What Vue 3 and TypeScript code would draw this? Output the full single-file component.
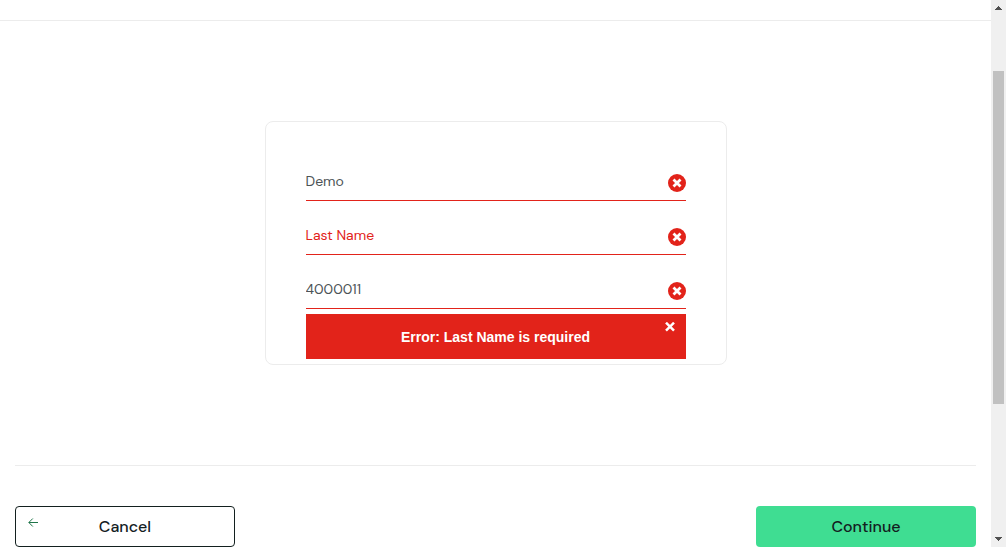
<script setup lang="ts">
import { reactive, ref } from 'vue'

interface Field {
  id: string
  label: string
  value: string
}

const fields = reactive<Field[]>([
  { id: 'first-name', label: 'First Name', value: 'Demo' },
  { id: 'last-name', label: 'Last Name', value: '' },
  { id: 'member-id', label: 'Member ID', value: '4000011' },
])
const showError = ref(true)
</script>

<template>
  <div class="shell">
    <div class="page">
      <header class="top"></header>
      <main class="content">
        <form id="details" class="card" @submit.prevent>
          <div v-for="field in fields" :key="field.id" class="field">
            <input
              :id="field.id"
              v-model="field.value"
              type="text"
              :aria-label="field.label"
              :placeholder="field.label"
              autocomplete="off"
            />
            <svg class="mark" viewBox="0 0 18 18" aria-hidden="true">
              <circle cx="9" cy="9" r="9" fill="#e2231a" />
              <path d="M5.5 5.5l7 7M12.5 5.5l-7 7" stroke="#fff" stroke-width="2.8" />
            </svg>
          </div>
          <div v-if="showError" class="alert" role="alert">
            <span>Error: Last Name is required</span>
            <button type="button" class="close" aria-label="Close" @click="showError = false">
              <svg viewBox="0 0 10 10" aria-hidden="true">
                <path d="M1 .7l8 8M9 .7l-8 8" stroke="#fff" stroke-width="2.5" />
              </svg>
            </button>
          </div>
        </form>
      </main>
      <footer class="actions">
        <button type="button" class="btn cancel">
          <svg class="arrow" viewBox="0 0 10 10" aria-hidden="true">
            <path d="M10 4.5H1M4.8 .5L.8 4.5l4 4" fill="none" stroke="#1f7549" stroke-width="1" />
          </svg>
          Cancel
        </button>
        <button type="submit" form="details" class="btn continue">Continue</button>
      </footer>
    </div>
    <div class="scrollbar" aria-hidden="true">
      <svg class="cap" viewBox="0 0 15 17">
        <path d="M7 6h1v1h1v1h1v1h1v1H4V9h1V8h1V7h1z" fill="#505050" />
      </svg>
      <div class="track"><div class="thumb"></div></div>
      <svg class="cap" viewBox="0 0 15 17">
        <path d="M7 11h1v-1h1V9h1V8h1V7H4v1h1v1h1v1h1z" fill="#505050" />
      </svg>
    </div>
  </div>
</template>

<style>
body {
  margin: 0;
  background: #fff;
}
</style>

<style scoped>
* {
  box-sizing: border-box;
}
.shell {
  display: flex;
  min-height: 100vh;
  font-family: 'DM Sans', Inter, 'Liberation Sans', sans-serif;
}
.page {
  flex: 1;
  min-width: 0;
}
.top {
  height: 21px;
  border-bottom: 1px solid #ececec;
}
.content {
  display: flex;
  justify-content: center;
  padding: 100px 15px;
}
.card {
  width: 100%;
  max-width: 462px;
  padding: 40px 40px 5px;
  border: 1px solid #ececec;
  border-radius: 8px;
}
.field {
  display: flex;
  align-items: center;
  height: 39px;
  border-bottom: 1px solid #e2231a;
}
.field + .field {
  margin-top: 15px;
}
.field input {
  flex: 1;
  min-width: 0;
  height: 38px;
  padding: 0;
  border: 0;
  outline: 0;
  background: transparent;
  color: #4c5356;
  font: 400 14px/20px 'DM Sans', Inter, 'Liberation Sans', sans-serif;
}
.field input::placeholder {
  color: #e2231a;
  opacity: 1;
}
.mark {
  width: 18px;
  height: 18px;
  margin-top: 4px;
}
.alert {
  position: relative;
  display: flex;
  align-items: center;
  justify-content: center;
  margin-top: 5px;
  min-height: 45px;
  background: #e2231a;
  color: #fff;
  font: 700 14px/20px 'Liberation Sans', Arial, sans-serif;
}
.close {
  position: absolute;
  top: 8px;
  right: 11px;
  width: 10px;
  height: 10px;
  padding: 0;
  border: 0;
  background: none;
  cursor: pointer;
}
.close svg {
  display: block;
  width: 10px;
  height: 10px;
}
.actions {
  display: flex;
  justify-content: space-between;
  margin: 0 15px;
  padding-top: 40px;
  border-top: 1px solid #ececec;
}
.btn {
  position: relative;
  width: 220px;
  height: 41px;
  padding: 0;
  border: 0;
  border-radius: 4px;
  color: #13201f;
  font: 500 16px/20px 'DM Sans', Inter, 'Liberation Sans', sans-serif;
  cursor: pointer;
}
.cancel {
  border: 1px solid #13201f;
  background: #fff;
}
.continue {
  background: #3fdd92;
}
.arrow {
  position: absolute;
  top: 11px;
  left: 12px;
  width: 10px;
  height: 10px;
}
.scrollbar {
  display: flex;
  flex-direction: column;
  width: 15px;
  background: #f0f0f0;
}
.cap {
  width: 15px;
  height: 17px;
}
.track {
  display: grid;
  flex: 1;
  grid-template-rows: 54fr 333fr 126fr;
  padding: 0 2px;
}
.thumb {
  grid-row: 2;
  background: #c1c1c1;
}
</style>
